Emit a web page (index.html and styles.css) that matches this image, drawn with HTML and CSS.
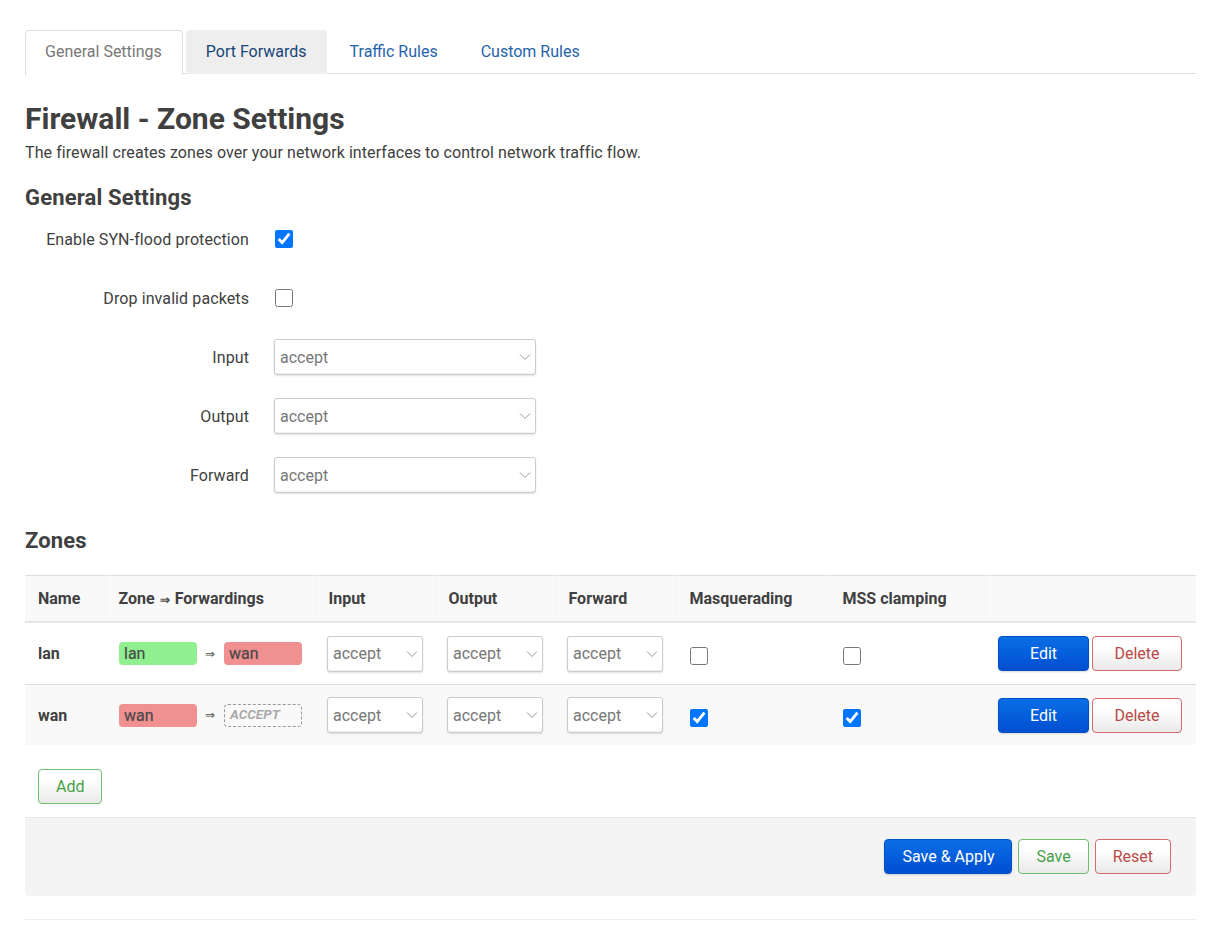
FILE: index.html
```html
<!DOCTYPE html>
<html lang="en">
<head>
<meta charset="utf-8">
<title>Firewall - Zone Settings</title>
<link rel="stylesheet" href="styles.css">
</head>
<body>
<div class="page">
  <ul class="tabs">
    <li class="tab active">General Settings</li>
    <li class="tab hover">Port Forwards</li>
    <li class="tab">Traffic Rules</li>
    <li class="tab">Custom Rules</li>
  </ul>

  <h2 class="title">Firewall - Zone Settings</h2>
  <p class="desc">The firewall creates zones over your network interfaces to control network traffic flow.</p>

  <h3 class="section">General Settings</h3>
  <div class="form">
    <div class="row">
      <label class="lbl">Enable SYN-flood protection</label>
      <div class="ctl"><input type="checkbox" class="cb" checked></div>
    </div>
    <div class="row">
      <label class="lbl">Drop invalid packets</label>
      <div class="ctl"><input type="checkbox" class="cb"></div>
    </div>
    <div class="row">
      <label class="lbl">Input</label>
      <div class="ctl"><div class="sel wide"><select><option>accept</option></select><svg class="chev" viewBox="0 0 12 8" width="12" height="8"><path d="M1 1.5 6 6.5 11 1.5" fill="none" stroke="#999" stroke-width="1"/></svg></div></div>
    </div>
    <div class="row">
      <label class="lbl">Output</label>
      <div class="ctl"><div class="sel wide"><select><option>accept</option></select><svg class="chev" viewBox="0 0 12 8" width="12" height="8"><path d="M1 1.5 6 6.5 11 1.5" fill="none" stroke="#999" stroke-width="1"/></svg></div></div>
    </div>
    <div class="row">
      <label class="lbl">Forward</label>
      <div class="ctl"><div class="sel wide"><select><option>accept</option></select><svg class="chev" viewBox="0 0 12 8" width="12" height="8"><path d="M1 1.5 6 6.5 11 1.5" fill="none" stroke="#999" stroke-width="1"/></svg></div></div>
    </div>
  </div>

  <h3 class="section zones-title">Zones</h3>
  <table class="zt">
    <colgroup>
      <col style="width:80px"><col style="width:210px"><col style="width:120px"><col style="width:120px"><col style="width:121px"><col style="width:153px"><col style="width:156px"><col>
    </colgroup>
    <thead>
      <tr>
        <th>Name</th>
        <th>Zone <span class="arr">⇒</span> Forwardings</th>
        <th>Input</th>
        <th>Output</th>
        <th>Forward</th>
        <th>Masquerading</th>
        <th>MSS clamping</th>
        <th></th>
      </tr>
    </thead>
    <tbody>
      <tr class="r1">
        <td class="name">lan</td>
        <td class="fwd"><span class="badge green">lan</span><span class="arr">⇒</span><span class="badge red">wan</span></td>
        <td class="sc"><div class="sel small"><select><option>accept</option></select><svg class="chev" viewBox="0 0 12 8" width="12" height="8"><path d="M1 1.5 6 6.5 11 1.5" fill="none" stroke="#999" stroke-width="1"/></svg></div></td>
        <td class="sc"><div class="sel small"><select><option>accept</option></select><svg class="chev" viewBox="0 0 12 8" width="12" height="8"><path d="M1 1.5 6 6.5 11 1.5" fill="none" stroke="#999" stroke-width="1"/></svg></div></td>
        <td class="sc"><div class="sel small"><select><option>accept</option></select><svg class="chev" viewBox="0 0 12 8" width="12" height="8"><path d="M1 1.5 6 6.5 11 1.5" fill="none" stroke="#999" stroke-width="1"/></svg></div></td>
        <td class="cc"><input type="checkbox" class="cb"></td>
        <td class="cc"><input type="checkbox" class="cb"></td>
        <td class="act"><div class="btns"><button class="btn primary mw">Edit</button><button class="btn negative mw">Delete</button></div></td>
      </tr>
      <tr class="r2">
        <td class="name">wan</td>
        <td class="fwd"><span class="badge red">wan</span><span class="arr">⇒</span><span class="badge empty">ACCEPT</span></td>
        <td class="sc"><div class="sel small"><select><option>accept</option></select><svg class="chev" viewBox="0 0 12 8" width="12" height="8"><path d="M1 1.5 6 6.5 11 1.5" fill="none" stroke="#999" stroke-width="1"/></svg></div></td>
        <td class="sc"><div class="sel small"><select><option>accept</option></select><svg class="chev" viewBox="0 0 12 8" width="12" height="8"><path d="M1 1.5 6 6.5 11 1.5" fill="none" stroke="#999" stroke-width="1"/></svg></div></td>
        <td class="sc"><div class="sel small"><select><option>accept</option></select><svg class="chev" viewBox="0 0 12 8" width="12" height="8"><path d="M1 1.5 6 6.5 11 1.5" fill="none" stroke="#999" stroke-width="1"/></svg></div></td>
        <td class="cc"><input type="checkbox" class="cb" checked></td>
        <td class="cc"><input type="checkbox" class="cb" checked></td>
        <td class="act"><div class="btns"><button class="btn primary mw">Edit</button><button class="btn negative mw">Delete</button></div></td>
      </tr>
    </tbody>
  </table>

  <div class="add-wrap"><button class="btn positive">Add</button></div>

  <div class="actions">
    <button class="btn primary">Save &amp; Apply</button>
    <button class="btn positive">Save</button>
    <button class="btn negative">Reset</button>
  </div>

  <div class="footer-line"></div>
</div>
</body>
</html>
```

FILE: styles.css
```css
html, body {
  margin: 0;
  padding: 0;
  background: #fff;
}
body {
  font-family: Roboto, "Liberation Sans", Arial, sans-serif;
  font-size: 16px;
  color: #404040;
}
.page {
  padding: 30px 24px 0 25px;
}

/* Tabs */
.tabs {
  list-style: none;
  margin: 0;
  padding: 0;
  display: flex;
  border-bottom: 1px solid #ddd;
  height: 43px;
}
.tab {
  padding: 11px 19px 0 19px;
  line-height: 20px;
  height: 32px;
  margin-right: 3px;
  border: 1px solid transparent;
  border-bottom: none;
  border-radius: 4px 4px 0 0;
  color: #1f63ab;
}
.tab.active {
  color: #777;
  background: #fff;
  border-color: #ddd;
  height: 33px;
  margin-bottom: -1px;
  padding-right: 20px;
}
.tab.hover {
  background: #eee;
  color: #17457a;
}

/* Headings */
.title {
  margin: 28px 0 0 0;
  font-size: 30px;
  line-height: 34px;
  font-weight: 700;
  color: #404040;
}
.desc {
  margin: 7px 0 0 0;
  line-height: 20px;
  letter-spacing: 0.08px;
}
.section {
  margin: 21px 0 0 0;
  font-size: 22px;
  line-height: 28px;
  font-weight: 700;
  letter-spacing: 0.15px;
}
.zones-title {
  margin-top: 34px;
}

/* Form */
.form {
  margin-top: 9px;
  display: flex;
  flex-direction: column;
  gap: 23px;
}
.row {
  display: flex;
  align-items: center;
  height: 36px;
  gap: 25px;
}
.lbl {
  width: 224px;
  text-align: right;
  color: #404040;
  letter-spacing: 0.1px;
}
.ctl {
  display: flex;
  align-items: center;
}
.cb {
  width: 18px;
  height: 18px;
  margin: 0;
}
.ctl .cb { margin-left: 1px; }

/* Select */
.sel {
  position: relative;
  height: 36px;
}
.sel.wide { width: 262px; }
.sel.small { width: 96px; }
.sel select {
  -webkit-appearance: none;
  appearance: none;
  width: 100%;
  height: 100%;
  box-sizing: border-box;
  border: 1px solid #ccc;
  border-radius: 3px;
  background: #fff;
  box-shadow: inset 0 -1px 1px rgba(0,0,0,0.06), 0 1px 2px rgba(0,0,0,0.12);
  font-family: Roboto, "Liberation Sans", Arial, sans-serif;
  font-size: 16px;
  color: #777;
  padding: 0 24px 0 5px;
  outline: none;
}
.chev {
  position: absolute;
  right: 5px;
  top: 14px;
  pointer-events: none;
}

/* Table */
.zt {
  margin-top: 20px;
  width: 100%;
  border-collapse: collapse;
  table-layout: fixed;
  border-top: 1px solid #ddd;
}
.zt th {
  background: #f9f9f9;
  text-align: left;
  font-weight: 700;
  height: 45px;
  padding: 0 0 0 13px;
  border-left: 1px solid #f5f5f5;
  border-bottom: 2px solid #e6e6e6;
  white-space: nowrap;
}
.zt th:first-child { border-left: none; }
.zt td {
  padding: 0 0 0 13px;
  vertical-align: middle;
  white-space: nowrap;
}
.zt .r1 td {
  height: 61px;
  border-bottom: 1px solid #ddd;
}
.zt .r2 td {
  height: 60px;
  background: #f9f9f9;
}
.zt td.name { font-weight: 700; }
.zt td.sc { padding-left: 12px; }
.zt td.cc { padding-left: 14px; }
.zt td.cc .cb { display: block; margin-top: 5px; }
.zt td.act { padding: 0 14px 0 0; }
.arr {
  font-size: 12px;
  color: #555;
}
th .arr { margin: 0 1px; }
.fwd {
  font-size: 16px;
  padding-left: 14px !important;
}
.fwd .arr {
  display: inline-block;
  margin: 0 9px 0 8px;
  vertical-align: middle;
}
.badge {
  display: inline-block;
  box-sizing: border-box;
  width: 78px;
  height: 23px;
  line-height: 23px;
  padding: 0 5px;
  border-radius: 4px;
  vertical-align: middle;
  color: #4a4a4a;
  text-shadow: 0 0 1px rgba(0,0,0,0.25);
}
.badge.green { background: #90f090; }
.badge.red { background: #f09090; }
.badge.empty {
  border: 1px dashed #999;
  background: transparent;
  color: #aaa;
  font-style: italic;
  font-weight: 700;
  font-size: 13.5px;
  line-height: 19px;
  height: 23px;
  text-shadow: none;
}

/* Buttons */
.btns {
  display: flex;
  justify-content: flex-end;
  gap: 3px;
}
.btn {
  font-family: Roboto, "Liberation Sans", Arial, sans-serif;
  font-size: 16px;
  height: 35px;
  padding: 0 17px;
  border-radius: 4px;
  border: 1px solid #ccc;
  background: linear-gradient(#fff, #fff 30%, #e6e6e6);
  cursor: pointer;
  box-sizing: border-box;
}
.btn.mw { min-width: 90px; }
.btn.primary {
  color: #fff;
  border-color: #0052c2;
  background: linear-gradient(#0a6ee6, #004fd1);
  box-shadow: 0 1px 2px rgba(0,0,0,0.15);
}
.btn.primary.mw { min-width: 91px; }
.btn.negative {
  color: #b94a48;
  border-color: #d46b69;
  background: linear-gradient(#fff, #fff 30%, #e9e9e9);
}
.btn.positive {
  color: #47a047;
  border-color: #6fbf6f;
  background: linear-gradient(#fff, #fff 30%, #e9e9e9);
}

.add-wrap {
  padding: 24px 0 0 13px;
}
.actions {
  margin-top: 13px;
  background: #f4f4f4;
  border-top: 1px solid #e6e6e6;
  border-radius: 0 0 4px 4px;
  height: 79px;
  box-sizing: border-box;
  padding: 21px 25px 0 0;
  display: flex;
  justify-content: flex-end;
  align-items: flex-start;
  gap: 6px;
}
.actions .btn { height: 35px; }
.footer-line {
  margin-top: 23px;
  border-top: 1px solid #eee;
  height: 11px;
}
```
